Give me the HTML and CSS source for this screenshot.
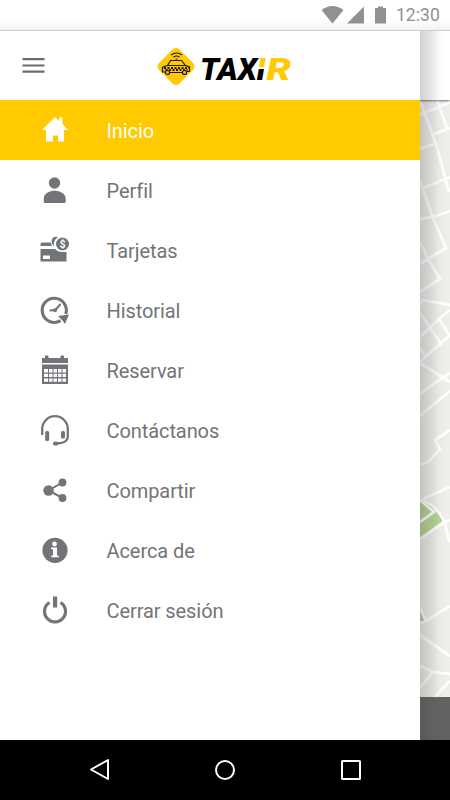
FILE: index.html
```html
<!DOCTYPE html>
<html lang="es">
<head>
    <meta charset="UTF-8">
    <meta name="viewport" content="width=device-width, initial-scale=1.0">
    <title>TAXiR</title>
    <link rel="stylesheet" href="styles.css">
</head>
<body>
    <div class="status-bar">
        <svg class="status-icons" width="68" height="20" viewBox="0 0 68 20">
            <path d="M1.500 5Q12.500-3 23.500 5L12.500 18.500z"/>
            <path d="M44 1.500V18.500H27z"/>
            <path d="M55 3h3V1.500h5V3h3v15.500H55z"/>
        </svg>
        <span class="clock">12:30</span>
    </div>

    <main class="screen">
        <nav class="drawer">
            <header class="drawer-header">
                <button class="menu-button" aria-label="Menú">
                    <svg width="23" height="16" viewBox="0 0 23 16">
                        <path d="M0.500 1.200h22M0.500 7.500h22M0.500 13.700h22"/>
                    </svg>
                </button>
                <svg class="logo" width="136" height="40" viewBox="0 0 136 40">
                    <defs>
                        <linearGradient id="split" x1="0" y1="12" x2="0" y2="34" gradientUnits="userSpaceOnUse">
                            <stop offset="0.42" stop-color="#ffcb00"/>
                            <stop offset="0.42" stop-color="#fff"/>
                            <stop offset="0.5" stop-color="#fff"/>
                            <stop offset="0.5" stop-color="#000"/>
                        </linearGradient>
                    </defs>
                    <rect class="logo-sign" x="4.500" y="6" width="29" height="29" rx="5" transform="rotate(45 19 20.500)"/>
                    <g class="logo-car">
                        <path d="M5.500 21l5-1.500 3-5h11l4 5 4 1.500v4.500h-3M13 26.500h12M8 26H5.500V21M11 19.500h18"/>
                        <circle cx="10.500" cy="26.500" r="2"/>
                        <circle cx="27.500" cy="26.500" r="2"/>
                        <path class="checks" d="M7 22h25M8.500 24h22"/>
                        <path d="M14 9q5.500-4 11 0M16.500 11q3-2 6 0M18.500 13h2"/>
                    </g>
                    <g class="logo-name">
                        <text x="43" y="34" textLength="57" lengthAdjust="spacingAndGlyphs">TAX</text>
                        <text class="logo-i" x="99.500" y="34" textLength="9" lengthAdjust="spacingAndGlyphs">I</text>
                        <text class="logo-r" x="109.500" y="34" textLength="24.500" lengthAdjust="spacingAndGlyphs">R</text>
                    </g>
                </svg>
            </header>

            <ul class="menu">
                <li class="menu-item active">
                    <svg class="icon" viewBox="0 0 32 32">
                        <path d="M16 3l4 4V3.500h3.500V10L29 16h-4v11.500h-6v-6h-5v6H7V16H3z"/>
                    </svg>
                    <span>Inicio</span>
                </li>
                <li class="menu-item">
                    <svg class="icon" viewBox="0 0 32 32">
                        <circle cx="15.500" cy="9" r="5.700"/>
                        <path d="M4.700 28.500v-3.500q0-7.500 11-8.500 11 1 11 8.500v2.500q0 1.500-1.500 1.500h-19q-1.500 0-1.500-1.500z"/>
                    </svg>
                    <span>Perfil</span>
                </li>
                <li class="menu-item">
                    <svg class="icon" viewBox="0 0 32 32">
                        <path d="M1.500 12V10q0-1.500 1.500-1.500h9q0 2 1 3.500zM1.500 15h14.500q2 2.500 6 3h5.500v9.500H1.500z"/>
                        <path d="M19 3q-6-1.500-6.500 4.500 0 3 2.500 4.500-1-5.500 4-9z"/>
                        <circle cx="23.500" cy="10" r="6.500"/>
                        <path class="cut" d="M4 21.500h7v3.500H4z"/>
                        <text class="cut coin" x="23.500" y="13.600" text-anchor="middle">$</text>
                    </svg>
                    <span>Tarjetas</span>
                </li>
                <li class="menu-item">
                    <svg class="icon" viewBox="0 0 32 32">
                        <path class="stroke" d="M26.800 20A12.100 12.100 0 1 0 21.500 26.700" stroke-width="3.100"/>
                        <path class="stroke" d="M21.500 10l-5 6-6 .5" stroke-width="2"/>
                        <circle cx="16" cy="16.300" r="2"/>
                        <path d="M19 22l11-1.500L26 30l-2.500-3.500z"/>
                    </svg>
                    <span>Historial</span>
                </li>
                <li class="menu-item">
                    <svg class="icon" viewBox="0 0 32 32">
                        <path d="M3 4h3V2q2-1.500 3.500 0v2h12V2q2-1.500 3.500 0v2h4v5H3zM3 10.500h26V30H3z"/>
                        <path class="cut" d="M5 15h4v3.500H5zM10 15h3.500v3.500H10zM14.500 15h3.500v3.500h-3.500zM19 15h3.500v3.500H19zM23.500 15h3.500v3.500h-3.500zM5 19.700h4V23H5zM10 19.700h3.500V23H10zM14.500 19.700h3.500V23h-3.500zM19 19.700h3.500V23H19zM23.500 19.700h3.500V23h-3.500zM5 24.500h4v3.300H5zM10 24.500h3.500v3.300H10zM14.500 24.500h3.500v3.300h-3.500zM19 24.500h3.500v3.300H19zM23.500 24.500h3.500v3.300h-3.500z"/>
                    </svg>
                    <span>Reservar</span>
                </li>
                <li class="menu-item">
                    <svg class="icon" viewBox="0 0 32 32">
                        <path class="stroke" d="M3.200 21v-6a12.800 12.800 0 0 1 25.600 0V22q0 5.500-6 6.800l-5 .5" stroke-width="2.300"/>
                        <rect x="6.200" y="17" width="4" height="10" rx="1.500"/>
                        <rect x="22" y="17" width="4" height="7.500" rx="1.500"/>
                        <ellipse cx="16.800" cy="29.500" rx="2.800" ry="2"/>
                    </svg>
                    <span>Contáctanos</span>
                </li>
                <li class="menu-item">
                    <svg class="icon" viewBox="0 0 32 32">
                        <path class="stroke" d="M23.500 8.500L9.500 16.500 23.500 24" stroke-width="2"/>
                        <circle cx="9.500" cy="16.500" r="5.200"/>
                        <circle cx="23.500" cy="8.500" r="3.900"/>
                        <circle cx="23.500" cy="24" r="3.900"/>
                    </svg>
                    <span>Compartir</span>
                </li>
                <li class="menu-item">
                    <svg class="icon" viewBox="0 0 32 32">
                        <circle cx="16" cy="16.300" r="12.600"/>
                        <circle class="cut" cx="15.500" cy="10" r="2.400"/>
                        <path class="cut" d="M12 13.500h6v7.800l1.800.5v1.400h-7.600v-1.400l1.800-.5v-5.800l-2-.5z"/>
                    </svg>
                    <span>Acerca de</span>
                </li>
                <li class="menu-item">
                    <svg class="icon" viewBox="0 0 32 32">
                        <path class="stroke" d="M10.500 8.500A10.500 10.500 0 1 0 21.500 8.500" stroke-width="3.200"/>
                        <path d="M14 2.500h4.200v11H14z"/>
                    </svg>
                    <span>Cerrar sesión</span>
                </li>
            </ul>
        </nav>

        <aside class="behind">
            <div class="app-bar"></div>
            <svg class="map" width="30" height="597" viewBox="0 0 30 597">
                <g class="park">
                    <path d="M0 401q12 0 23 20L0 438z"/>
                    <path d="M0 509l6 12-6 2z"/>
                </g>
                <path class="street" d="M0 1l16 43 13 48M17 0l10 28M0 15l30-13M12 35l18-7M0 49l16-6M3 88l27-11M0 81l13 37 13 30-18 11-8 5M0 119l13-2 17-6M0 142l8 17 12 20-20 13M0 205l3-5 27 5"/>
                <path class="street" d="M0 213l22 32M19 219l11 17M0 237l19-18 11-9M0 248l6 9M0 262l20-18 10-9M0 263l30 19M0 294l22-16 8-5M0 316l30-25M0 365l8-3 12-13-5-9 15-10M3 399l27-12"/>
                <path class="street" d="M0 400q15 3 24 21c3 6 2 13 6 21M0 400l14 12-14 10M0 439l24-17 6-2M0 508l6 13 24-15M0 523l7-2M0 535l30 21M0 566l13 6 17 2M0 588l13-16M15 597l15-16"/>
            </svg>
            <div class="bottom-bar"></div>
        </aside>
    </main>

    <footer class="nav-bar">
        <svg viewBox="0 0 24 24"><path d="M4 11.500L21 2v19z"/></svg>
        <svg viewBox="0 0 24 24"><circle cx="12" cy="12" r="9"/></svg>
        <svg viewBox="0 0 24 24"><rect x="3" y="3" width="18" height="18" rx="0.500"/></svg>
    </footer>
</body>
</html>
```
FILE: styles.css
```css
body {
    font-family: Roboto, "Liberation Sans", sans-serif;
    background-color: #fff;
    color: #737478;
    margin: 0;
    height: 800px;
    display: flex;
    flex-direction: column;
    overflow: hidden;
}

.status-bar {
    height: 31px;
    box-sizing: border-box;
    display: flex;
    justify-content: flex-end;
    align-items: center;
    gap: 8px;
    padding-right: 10px;
    border-bottom: 1px solid #ccc;
    background: linear-gradient(#fff 65%, #f3f3f3);
}

.status-icons {
    fill: #909194;
}

.clock {
    font-size: 17.5px;
    letter-spacing: 0.1px;
    color: #909194;
}

.screen {
    height: 709px;
    display: flex;
}

.drawer {
    width: 420px;
    background-color: #fff;
}

.drawer-header {
    height: 69px;
    display: flex;
    align-items: center;
}

.menu-button {
    display: flex;
    margin-left: 22px;
    padding: 0;
    border: none;
    background: none;
}

.menu-button svg {
    stroke: #6b6b70;
    stroke-width: 2.2;
}

.logo {
    margin-left: 112px;
    overflow: visible;
}

.logo-sign {
    fill: #ffcb00;
}

.logo-car {
    fill: none;
    stroke: #1c1a0c;
    stroke-width: 1.2;
}

.logo-car .checks {
    stroke-width: 2;
    stroke-dasharray: 2 1.5;
}

.logo-name {
    font-size: 31px;
    font-weight: 900;
    font-style: italic;
    fill: #000;
}

.logo-name .logo-i {
    fill: url(#split);
}

.logo-name .logo-r {
    fill: #ffcb00;
}

.menu {
    list-style: none;
    margin: 0;
    padding: 0;
}

.menu-item {
    height: 60px;
    display: flex;
    align-items: center;
    gap: 35.5px;
    padding-left: 39px;
    font-size: 20px;
    letter-spacing: -0.08px;
}

.menu-item span {
    padding-top: 1px;
}

.menu-item.active {
    background-color: #ffcb00;
    color: #fff;
}

.icon {
    width: 32px;
    height: 32px;
    fill: currentColor;
}

.icon .stroke {
    fill: none;
    stroke: currentColor;
}

.icon .cut {
    fill: #fff;
}

.icon .coin {
    font-size: 10px;
    font-weight: bold;
}

.behind {
    position: relative;
    width: 30px;
    display: flex;
    flex-direction: column;
    overflow: hidden;
    background-color: #f0eeea;
}

/* shadow thrown by the open drawer */
.behind::after {
    content: "";
    position: absolute;
    inset: 0;
    z-index: 2;
    background: linear-gradient(to right, rgba(0, 0, 0, 0.18), rgba(0, 0, 0, 0.1) 35%, rgba(0, 0, 0, 0.02) 65%, transparent 90%);
}

.app-bar {
    height: 69px;
    background-color: #fff;
    box-shadow: 0 1px 2px rgba(0, 0, 0, 0.5);
    z-index: 1;
}

.street {
    fill: none;
    stroke: #fff;
    stroke-width: 2.8;
}

.park {
    fill: #b9d797;
}

.bottom-bar {
    flex: 1;
    z-index: 3;
    background: linear-gradient(to right, #595857, #636261 50%);
}

.nav-bar {
    height: 60px;
    display: flex;
    justify-content: space-between;
    align-items: center;
    padding: 0 87px;
    background-color: #000;
}

.nav-bar svg {
    width: 24px;
    height: 24px;
    fill: none;
    stroke: #fff;
    stroke-width: 2;
    stroke-linejoin: round;
}
```
